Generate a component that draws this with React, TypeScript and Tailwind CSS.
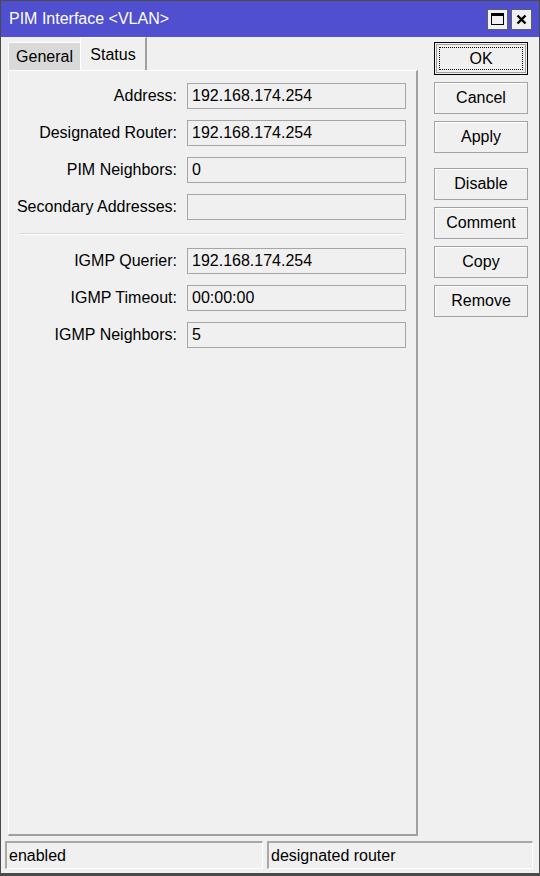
import React from 'react';

const font = { fontFamily: '"Liberation Sans", Arial, sans-serif' };

const rowsTop = [
  { label: 'Address:', value: '192.168.174.254' },
  { label: 'Designated Router:', value: '192.168.174.254' },
  { label: 'PIM Neighbors:', value: '0' },
  { label: 'Secondary Addresses:', value: '' },
];

const rowsBottom = [
  { label: 'IGMP Querier:', value: '192.168.174.254' },
  { label: 'IGMP Timeout:', value: '00:00:00' },
  { label: 'IGMP Neighbors:', value: '5' },
];

const Field: React.FC<{ label: string; value: string }> = ({ label, value }) => (
  <div className="flex items-center h-[26px]">
    <div className="w-[168px] text-right text-[16px] text-black whitespace-nowrap">{label}</div>
    <div className="ml-[10px] w-[219px] h-[26px] border border-[#a6a6a6] bg-[#f0f0f0] flex items-center px-[4px] text-[16px] text-black">
      {value}
    </div>
  </div>
);

const Btn: React.FC<{ children: React.ReactNode; focused?: boolean }> = ({ children, focused }) =>
  focused ? (
    <div className="w-[94px] h-[33px] border border-black p-[1px]">
      <div className="w-full h-full border border-[#a0a0a0] bg-[#f0f0f0] p-[2px]">
        <div className="w-full h-full border border-dotted border-black flex items-center justify-center text-[16px] text-black">
          {children}
        </div>
      </div>
    </div>
  ) : (
    <div className="w-[94px] h-[32px] border border-[#a3a3a3] bg-[#f0f0f0] shadow-[inset_1px_1px_0_#ffffff] flex items-center justify-center text-[16px] text-black">
      {children}
    </div>
  );

export default function App() {
  return (
    <div style={font} className="w-[540px] h-[876px] bg-[#f0f0f0] border border-[#4a4a4a] border-b-[3px] flex flex-col overflow-hidden">
      {/* Title bar */}
      <div className="h-[36px] bg-[#4f4fcf] flex items-center pl-[8px] pr-[7px] shrink-0">
        <span className="text-white text-[16px]">PIM Interface &lt;VLAN&gt;</span>
        <div className="ml-auto flex gap-[3px]">
          <div className="w-[21px] h-[21px] bg-[#f0f0f0] border border-[#606060] flex items-center justify-center">
            <div className="w-[13px] h-[12px] border border-black border-t-[3px]" />
          </div>
          <div className="w-[21px] h-[21px] bg-[#f0f0f0] border border-[#606060] flex items-center justify-center">
            <svg width="11" height="11" viewBox="0 0 11 11">
              <path d="M1.5 1.5 L9.5 9.5 M9.5 1.5 L1.5 9.5" stroke="#000" strokeWidth="2.4" />
            </svg>
          </div>
        </div>
      </div>

      {/* Body */}
      <div className="flex-1 flex pl-[7px] pr-[11px]">
        <div className="w-[411px] flex flex-col pb-[3px]">
          {/* Tabs */}
          <div className="h-[33px] flex items-end shrink-0">
            <div className="h-[28px] w-[72px] bg-[#d9d9d9] border-t border-l border-white flex items-center justify-center text-[16px] text-black">
              General
            </div>
            <div className="h-[33px] w-[67px] bg-[#f0f0f0] border-t border-l border-white border-r-2 border-r-[#a0a0a0] flex items-start justify-center pt-[5px] text-[16px] text-black">
              Status
            </div>
          </div>
          {/* Panel */}
          <div className="flex-1 border-t border-l border-white border-r-2 border-b-2 border-r-[#a0a0a0] border-b-[#a0a0a0] pt-[12px]">
            <div className="flex flex-col gap-[11px]">
              {rowsTop.map((r) => (
                <Field key={r.label} label={r.label} value={r.value} />
              ))}
            </div>
            <div className="ml-[10px] mr-[13px] my-[13px] h-[2px] border-t border-[#d8d8d8] border-b border-b-white" />
            <div className="flex flex-col gap-[11px]">
              {rowsBottom.map((r) => (
                <Field key={r.label} label={r.label} value={r.value} />
              ))}
            </div>
          </div>
        </div>

        {/* Buttons */}
        <div className="ml-[16px] pt-[5px] flex flex-col">
          <Btn focused>OK</Btn>
          <div className="mt-[7px] flex flex-col gap-[7px]">
            <Btn>Cancel</Btn>
            <Btn>Apply</Btn>
          </div>
          <div className="mt-[15px] flex flex-col gap-[7px]">
            <Btn>Disable</Btn>
            <Btn>Comment</Btn>
            <Btn>Copy</Btn>
            <Btn>Remove</Btn>
          </div>
        </div>
      </div>

      {/* Status bar */}
      <div className="h-[34px] shrink-0 flex gap-[4px] pl-[4px] pr-[6px] pt-[2px] pb-[4px]">
        <div className="w-[258px] border-t-2 border-l-2 border-[#a8a8a8] border-b border-r border-b-white border-r-white flex items-center px-[2px] text-[16px] text-black">
          enabled
        </div>
        <div className="flex-1 border-t-2 border-l-2 border-[#a8a8a8] border-b border-r border-b-white border-r-white flex items-center px-[2px] text-[16px] text-black">
          designated router
        </div>
      </div>
    </div>
  );
}
